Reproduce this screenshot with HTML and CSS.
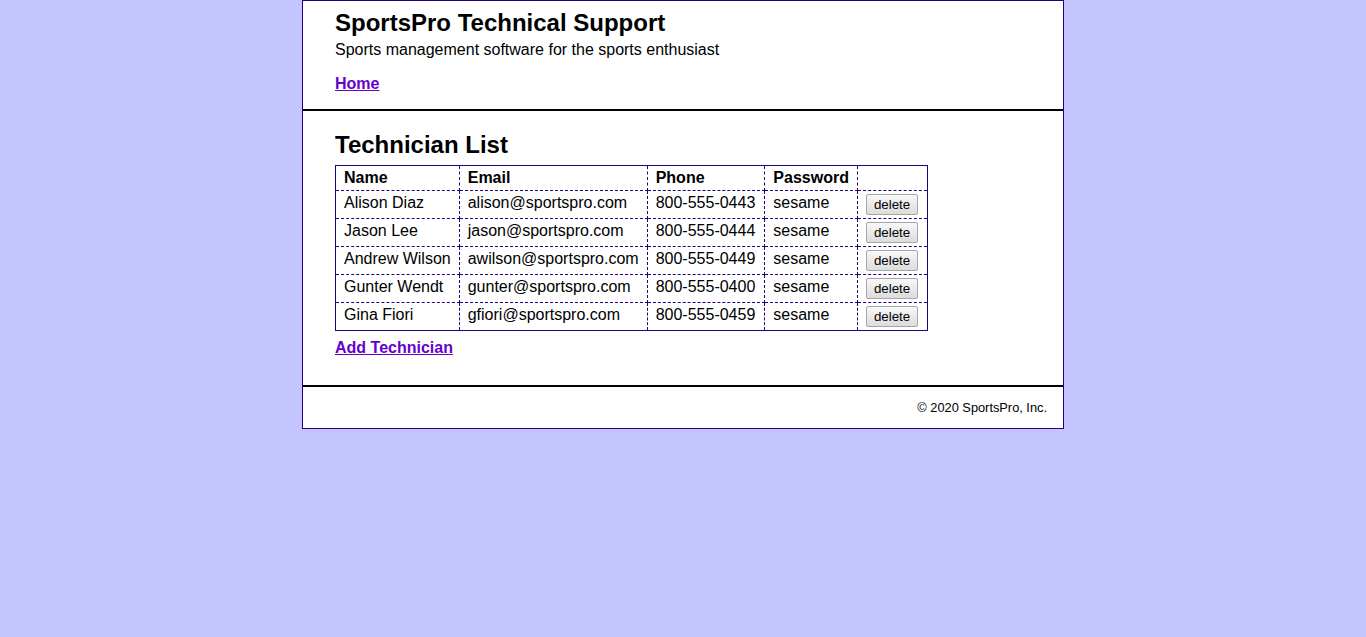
FILE: index.html
```html
<!DOCTYPE html>
<html lang="en">
<head>
<meta charset="utf-8">
<title>SportsPro Technical Support</title>
<link rel="stylesheet" href="styles.css">
</head>
<body>
<div class="page">
  <header class="header">
    <h1 class="title">SportsPro Technical Support</h1>
    <p class="tagline">Sports management software for the sports enthusiast</p>
    <nav class="nav"><a class="link" href="#">Home</a></nav>
  </header>
  <main class="main">
    <h2 class="heading">Technician List</h2>
    <table class="tech-table">
      <tr><th>Name</th><th>Email</th><th class="phone">Phone</th><th>Password</th><th class="action"></th></tr>
      <tr><td>Alison Diaz</td><td>alison@sportspro.com</td><td class="phone">800-555-0443</td><td>sesame</td><td class="action"><button class="btn">delete</button></td></tr>
      <tr><td>Jason Lee</td><td>jason@sportspro.com</td><td class="phone">800-555-0444</td><td>sesame</td><td class="action"><button class="btn">delete</button></td></tr>
      <tr><td>Andrew Wilson</td><td>awilson@sportspro.com</td><td class="phone">800-555-0449</td><td>sesame</td><td class="action"><button class="btn">delete</button></td></tr>
      <tr><td>Gunter Wendt</td><td>gunter@sportspro.com</td><td class="phone">800-555-0400</td><td>sesame</td><td class="action"><button class="btn">delete</button></td></tr>
      <tr><td>Gina Fiori</td><td>gfiori@sportspro.com</td><td class="phone">800-555-0459</td><td>sesame</td><td class="action"><button class="btn">delete</button></td></tr>
    </table>
    <p class="add"><a class="link" href="#">Add Technician</a></p>
  </main>
  <footer class="footer">
    <p class="copy">&copy; 2020 SportsPro, Inc.</p>
  </footer>
</div>
</body>
</html>
```
FILE: styles.css
```css
html, body {
  margin: 0;
  padding: 0;
}
body {
  background: #c4c4fe;
  font-family: "Liberation Sans", Arial, sans-serif;
  color: #000;
  font-size: 16px;
}
.page {
  width: 760px;
  margin: 0 auto;
  background: #fff;
  border: 1px solid #22007a;
}
.header {
  padding: 8px 32px 16px;
  border-bottom: 2px solid #000;
}
.title {
  margin: 0;
  font-size: 24px;
  line-height: 28px;
  font-weight: bold;
}
.tagline {
  margin: 4px 0 0;
  line-height: 18px;
}
.nav {
  margin-top: 16px;
  line-height: 18px;
}
.link {
  color: #6600cc;
  font-weight: bold;
  text-decoration: underline;
}
.main {
  padding: 20px 32px 28px;
}
.heading {
  margin: 0 0 6px;
  font-size: 24px;
  line-height: 28px;
  font-weight: bold;
}
.tech-table {
  border-collapse: collapse;
  border: 1px solid #22007a;
}
.tech-table th,
.tech-table td {
  border: 1px dashed #22007a;
  padding: 3px 8px;
  text-align: left;
  vertical-align: top;
  line-height: 18px;
  font-size: 16px;
  white-space: nowrap;
}
.tech-table th {
  font-weight: bold;
}
.tech-table .phone {
  padding-right: 9px;
}
.tech-table .action {
  padding-right: 9px;
}
.btn {
  font-family: "Liberation Sans", Arial, sans-serif;
  font-size: 13.333px;
  line-height: 15px;
  padding: 2px 7px;
  margin: 0;
  border: 1px solid #a6a6a6;
  border-radius: 2px;
  background: linear-gradient(#f8f8f8, #dcdcdc);
  color: #000;
  display: block;
}
.add {
  margin: 8px 0 0;
  line-height: 18px;
}
.footer {
  border-top: 2px solid #000;
  padding: 13px 16px 13px;
}
.copy {
  margin: 0;
  text-align: right;
  font-size: 12.8px;
  line-height: 15px;
}
```
